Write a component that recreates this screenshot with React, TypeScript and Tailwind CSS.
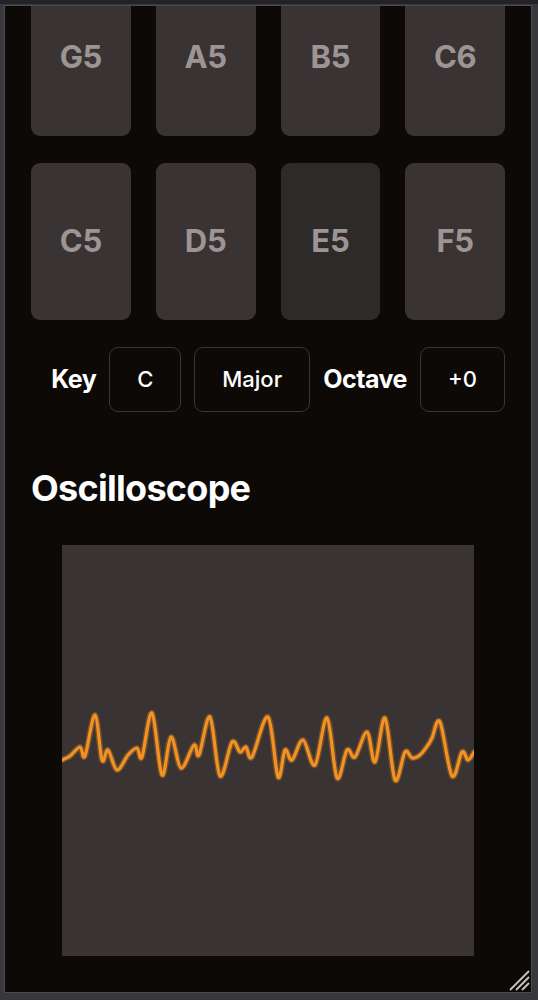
import React from "react";

const pts: [number, number][] = [
  [62, 760], [70, 756], [80, 747], [85, 756], [95, 715], [102, 760], [108, 750],
  [117, 770], [128, 755], [137, 748], [142, 757], [152, 713], [162, 775], [171, 737],
  [181, 768], [194, 745], [199, 755], [210, 717], [220, 776], [232, 742], [240, 752],
  [246, 747], [252, 757], [268, 717], [278, 777], [285, 750], [292, 760], [303, 740],
  [315, 765], [327, 718], [337, 778], [347, 750], [355, 757], [367, 732], [375, 762],
  [385, 718], [395, 780], [405, 752], [412, 758], [420, 755], [428, 745], [432, 738],
  [440, 722], [452, 776], [462, 752], [468, 760], [474, 752],
];

function smoothPath(p: [number, number][], ox: number, oy: number) {
  const q = p.map(([x, y]) => [x - ox, y - oy] as [number, number]);
  let d = `M ${q[0][0]} ${q[0][1]}`;
  for (let i = 0; i < q.length - 1; i++) {
    const p0 = q[i - 1] || q[i];
    const p1 = q[i];
    const p2 = q[i + 1];
    const p3 = q[i + 2] || p2;
    const c1x = p1[0] + (p2[0] - p0[0]) / 6;
    const c1y = p1[1] + (p2[1] - p0[1]) / 6;
    const c2x = p2[0] - (p3[0] - p1[0]) / 6;
    const c2y = p2[1] - (p3[1] - p1[1]) / 6;
    d += ` C ${c1x.toFixed(1)} ${c1y.toFixed(1)} ${c2x.toFixed(1)} ${c2y.toFixed(1)} ${p2[0]} ${p2[1]}`;
  }
  return d;
}

const rows = [
  ["G5", "A5", "B5", "C6"],
  ["C5", "D5", "E5", "F5"],
];

export default function App() {
  const d = smoothPath(pts, 62, 545);
  return (
    <div
      className="w-[538px] h-[1000px] bg-[#37373c] pt-[1px] pl-[4px] pr-[6px] pb-[7px] border-t-[4px] border-[#232327]"
      style={{ fontFamily: "Inter, 'Noto Sans', sans-serif" }}
    >
      <div className="relative h-full border border-[#4b4b50] bg-[#0d0907] overflow-hidden">
        <div className="px-[26px] mt-[-27px]">
          <div className="flex flex-col gap-[27px]">
            {rows.map((r, ri) => (
              <div key={ri} className="grid grid-cols-4 gap-[25px]">
                {r.map((n) => (
                  <div
                    key={n}
                    className={`h-[157px] rounded-[9px] flex items-center justify-center text-[31px] font-bold text-[#9d9594] tracking-[-0.01em] ${
                      n === "E5" ? "bg-[#2d2b2a]" : "bg-[#393333]"
                    }`}
                  >
                    {n}
                  </div>
                ))}
              </div>
            ))}
          </div>
          <div className="mt-[27px] flex items-center justify-end gap-[13px] text-white">
            <span className="text-[25px] font-bold tracking-[-0.02em]">Key</span>
            <div className="w-[72px] h-[65px] rounded-[9px] border border-[#3b3535] flex items-center justify-center text-[22px] font-medium">
              C
            </div>
            <div className="w-[116px] h-[65px] rounded-[9px] border border-[#3b3535] flex items-center justify-center text-[22px] font-medium">
              Major
            </div>
            <span className="text-[25px] font-bold tracking-[-0.02em]">Octave</span>
            <div className="w-[85px] h-[65px] rounded-[9px] border border-[#3b3535] flex items-center justify-center text-[22px] font-medium">
              +0
            </div>
          </div>
          <h2 className="mt-[54px] text-[36px] leading-[44px] font-bold text-white tracking-[-0.02em]">
            Oscilloscope
          </h2>
          <div className="mt-[35px] ml-[31px] w-[412px] h-[411px] bg-[#393333]">
            <svg width="412" height="411" viewBox="0 0 412 411">
              <path d={d} fill="none" stroke="#f7941d" strokeOpacity="0.3" strokeWidth="6" strokeLinejoin="round" strokeLinecap="round" />
              <path d={d} fill="none" stroke="#f39222" strokeWidth="3.2" strokeLinejoin="round" strokeLinecap="round" />
            </svg>
          </div>
        </div>
        <svg className="absolute right-[1px] bottom-[1px]" width="24" height="24" viewBox="0 0 24 24">
          <path d="M23 4 L4 23 M23 10 L10 23 M23 16 L16 23" stroke="#c4c4c4" strokeWidth="1.8" />
        </svg>
      </div>
    </div>
  );
}
